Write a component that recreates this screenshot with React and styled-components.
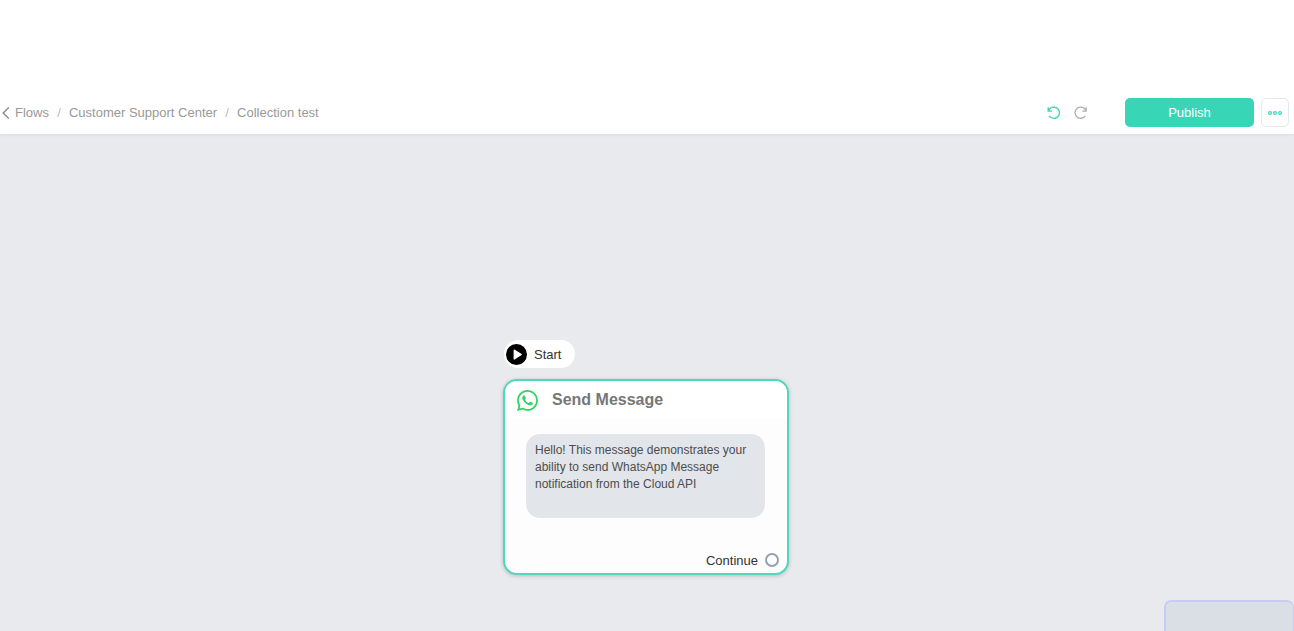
import React from "react";
import styled, { createGlobalStyle } from "styled-components";
import { SiWhatsapp } from "react-icons/si";

const GlobalStyle = createGlobalStyle`
  *, *::before, *::after { box-sizing: border-box; }
  body {
    margin: 0;
    background: #fff;
    font-family: "Liberation Sans", Arial, sans-serif;
  }
`;

const Page = styled.div`
  display: flex;
  flex-direction: column;
  min-height: 100vh;
  padding-top: 91px;
`;

const Toolbar = styled.header`
  position: relative;
  z-index: 1;
  display: flex;
  align-items: center;
  justify-content: space-between;
  height: 43px;
  padding: 0 5px 0 2px;
  background: #fff;
  box-shadow: 0 2px 2px rgba(0, 0, 0, 0.03);
`;

const Breadcrumbs = styled.nav`
  display: flex;
  align-items: center;
  font-size: 13px;
  line-height: 20px;
`;

const Crumb = styled.a`
  display: flex;
  align-items: center;
  gap: 5px;
  color: #999;
  text-decoration: none;
`;

const Divider = styled.span`
  width: 20px;
  text-align: center;
  color: #b8bcc6;
`;

const Actions = styled.div`
  display: flex;
  align-items: center;
`;

const IconButton = styled.button`
  display: flex;
  padding: 0;
  margin-right: 13px;
  border: 0;
  background: none;
  color: ${(p) => (p.$active ? "#38d6b7" : "#b0b0b0")};
`;

const PublishButton = styled.button`
  width: 129px;
  height: 29px;
  margin: 0 7px 0 24px;
  border: 0;
  border-radius: 5px;
  background: #38d6b7;
  color: #fff;
  font: 13px/20px "Liberation Sans", Arial, sans-serif;
`;

const MoreButton = styled.button`
  display: flex;
  align-items: center;
  justify-content: center;
  width: 28px;
  height: 29px;
  padding: 0;
  border: 1px solid #e6e8eb;
  border-radius: 5px;
  background: #fff;
  color: #38d6b7;
`;

const Canvas = styled.main`
  position: relative;
  flex: 1;
  display: flex;
  flex-direction: column;
  align-items: center;
  padding: 206px 2px 0 0;
  overflow: hidden;
  background: #e9eaee;
`;

const NodeGroup = styled.div`
  display: flex;
  flex-direction: column;
  align-items: flex-start;
  gap: 11px;
  width: 286px;
`;

const StartNode = styled.div`
  display: flex;
  align-items: center;
  gap: 7px;
  height: 28px;
  margin-left: 1px;
  padding: 0 14px 0 2px;
  border-radius: 14px;
  background: #fff;
  color: #333;
  font-size: 13px;
`;

const Card = styled.section`
  width: 100%;
  overflow: hidden;
  border: 2px solid #4fd8bd;
  border-radius: 14px;
  background: #fdfdfd;
  box-shadow: 0 1px 4px rgba(0, 0, 0, 0.2);
`;

const CardHeader = styled.header`
  display: flex;
  align-items: center;
  gap: 14px;
  height: 38px;
  padding-left: 12px;
  background: #fff;
`;

const CardTitle = styled.h2`
  margin: 0;
  color: #777;
  font-size: 16px;
  line-height: 20px;
`;

const Message = styled.p`
  min-height: 84px;
  margin: 15px 22px 0 21px;
  padding: 8px 9px;
  border-radius: 14px;
  background: #e2e5ea;
  color: #4d4d4d;
  font-size: 12px;
  line-height: 17px;
`;

const CardFooter = styled.footer`
  display: flex;
  align-items: center;
  justify-content: flex-end;
  gap: 7px;
  height: 20px;
  margin: 32px 8px 3px;
  color: #333;
  font-size: 13px;
`;

const Handle = styled.span`
  width: 14px;
  height: 14px;
  border: 2px solid #94a0b5;
  border-radius: 50%;
  background: #fff;
`;

const MiniMap = styled.aside`
  position: absolute;
  right: 0;
  bottom: 0;
  width: 130px;
  height: 31px;
  border: 1px solid #c8ccf4;
  border-width: 2px 1px 0 2px;
  border-radius: 7px 7px 0 0;
  background: #dadee5;
`;

const ChevronIcon = () => (
  <svg width="8" height="14" viewBox="0 0 8 14" fill="none" stroke="#888" strokeWidth="1.3" aria-hidden="true">
    <path d="M6.8 1.5 1.2 7l5.6 5.5" />
  </svg>
);

const UndoIcon = () => (
  <svg width="14" height="14" viewBox="0 0 14 14" fill="none" stroke="currentColor" strokeWidth="1.3" aria-hidden="true">
    <path d="M1.2 1.2v3.9h3.9M1.4 5C2.6 2.4 4.6 1.2 7 1.2a5.6 5.6 0 1 1-4.9 8.6" />
  </svg>
);

const RedoIcon = () => (
  <svg width="14" height="14" viewBox="0 0 14 14" fill="none" stroke="currentColor" strokeWidth="1.3" aria-hidden="true">
    <path d="M12.2 1.2v3.9H8.3M12 5A5.6 5.6 0 1 0 11.3 9.8" />
  </svg>
);

const MoreIcon = () => (
  <svg width="14" height="6" viewBox="0 0 14 6" fill="none" stroke="currentColor" strokeWidth="1.2" aria-hidden="true">
    <circle cx="2" cy="3" r="1.4" />
    <circle cx="7" cy="3" r="1.4" />
    <circle cx="12" cy="3" r="1.4" />
  </svg>
);

const PlayIcon = () => (
  <svg width="21" height="21" viewBox="0 0 21 21" aria-hidden="true">
    <circle cx="10.5" cy="10.5" r="10.5" fill="#000" />
    <path d="M8.2 6 15.3 10.5 8.2 15z" fill="#fff" stroke="#fff" strokeWidth="1.2" strokeLinejoin="round" />
  </svg>
);

export default function App() {
  return (
    <>
      <GlobalStyle />
      <Page>
        <Toolbar>
          <Breadcrumbs aria-label="Breadcrumb">
            <Crumb href="#flows"><ChevronIcon />Flows</Crumb>
            <Divider>/</Divider>
            <Crumb href="#support">Customer Support Center</Crumb>
            <Divider>/</Divider>
            <Crumb href="#collection">Collection test</Crumb>
          </Breadcrumbs>
          <Actions>
            <IconButton $active aria-label="Undo"><UndoIcon /></IconButton>
            <IconButton aria-label="Redo"><RedoIcon /></IconButton>
            <PublishButton>Publish</PublishButton>
            <MoreButton aria-label="More options"><MoreIcon /></MoreButton>
          </Actions>
        </Toolbar>
        <Canvas>
          <NodeGroup>
            <StartNode><PlayIcon />Start</StartNode>
            <Card>
              <CardHeader>
                <SiWhatsapp size={21} color="#2fd366" aria-hidden="true" />
                <CardTitle>Send Message</CardTitle>
              </CardHeader>
              <Message>
                Hello! This message demonstrates your ability to send WhatsApp Message notification from the Cloud API
              </Message>
              <CardFooter>Continue<Handle /></CardFooter>
            </Card>
          </NodeGroup>
          <MiniMap aria-label="Mini map" />
        </Canvas>
      </Page>
    </>
  );
}
